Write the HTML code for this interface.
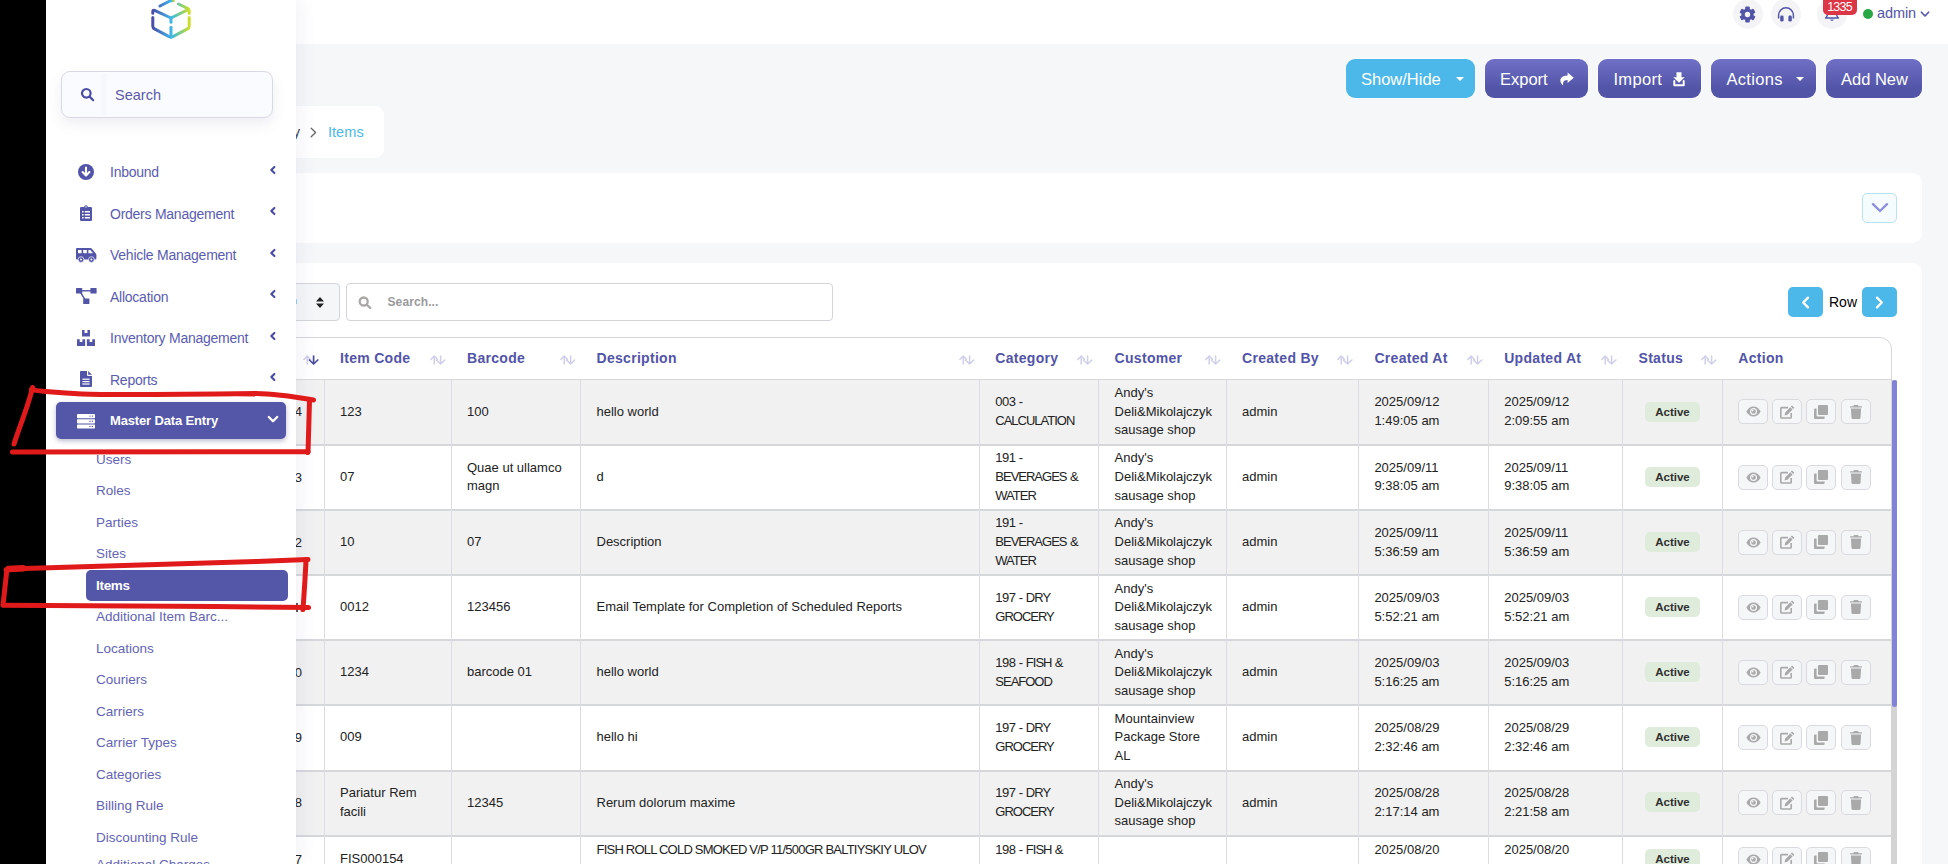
<!DOCTYPE html>
<html lang="en">
<head>
<meta charset="utf-8">
<title>Items</title>
<style>
*{box-sizing:border-box;margin:0;padding:0}
html,body{width:1948px;height:864px;overflow:hidden}
body{font-family:"Liberation Sans",sans-serif;background:#f6f7f9;color:#222;position:relative;font-size:13px}
.abs{position:absolute}
#black{left:0;top:0;width:46px;height:864px;background:#000}
#topbar{left:296px;top:0;width:1652px;height:44px;background:#fff}
#sidebar{left:46px;top:0;width:250px;height:864px;background:#fff;box-shadow:5px 0 16px rgba(90,100,160,.075);z-index:5;overflow:hidden}
/* sidebar */
.sb-search{left:15px;top:71px;width:212px;height:47px;border:1px solid #d9d9e3;border-radius:9px;background:#fafbfe;box-shadow:0 6px 14px rgba(90,90,140,.10)}
.sb-search span{position:absolute;left:53px;top:15px;font-size:14.5px;color:#5a5aa8}
.mi{left:0;width:250px;height:36px;color:#5a5cb0;font-size:14px;letter-spacing:-.25px}
.mi .t{position:absolute;left:64px;top:11.5px;white-space:nowrap}
.mi svg.ic{position:absolute}
.mi svg.ch{position:absolute;left:222px;top:9px}
.mi.act{left:10px;width:230px;background:#5456a8;border-radius:5px;color:#fff;box-shadow:0 2px 5px rgba(60,60,120,.35)}
.mi.act .t{left:54px;font-weight:bold;font-size:13px;letter-spacing:-.15px}
.si{left:50px;color:#6364b4;font-size:13.5px;white-space:nowrap;line-height:16px}
.si.act{line-height:normal;letter-spacing:-.3px;left:40px;width:202px;height:31px;background:#5456a8;border-radius:5px;color:#fff;font-weight:bold;padding:8px 0 0 10px}
/* top buttons */
.btn{top:59px;height:39px;border-radius:9px;box-shadow:0 0 0 1px rgba(255,255,255,.55);color:#fff;font-size:16.5px;background:linear-gradient(#7071c6,#5254a8 75%);white-space:nowrap}
.btn span{position:absolute;top:10.8px}
.btn.blue{background:#4cb8e9}
.card{background:#fff;border-radius:10px}
/* table */
#tbl{border:1px solid #d6d6da;border-radius:0 12px 0 0;background:#fff;overflow:hidden}
.th{top:0;height:42px;color:#5254a8;font-weight:bold;font-size:14px;white-space:nowrap;line-height:40.6px;letter-spacing:.3px}
.row{left:0;width:100%}
.row.odd{background:#f1f1f1}
.cell{color:#222;font-size:13px;line-height:19px;white-space:nowrap}
.cat{letter-spacing:-1px;word-spacing:.8px}.cat .n{letter-spacing:-.45px;word-spacing:0}.u{letter-spacing:-.78px}
.vl{top:42px;width:1px;height:500px;background:#dcdce2}
.badge{width:55px;height:20px;border-radius:5px;background:#dfecdc;color:#2f2f2f;font-weight:bold;font-size:11.5px;text-align:center;line-height:20px}
.ab{width:29.4px;height:24.9px;border:1px solid #d9d9df;border-radius:5px;background:#f5f6f8}
</style>
</head>
<body>
<div id="black" class="abs"></div>
<div id="topbar" class="abs"></div>

<!-- MAIN CONTENT -->
<div id="main">
<div class="abs" style="left:1732.5px;top:-1px;width:30px;height:30px;border-radius:50%;background:#f4f4f6"></div>
<svg class="abs" style="left:1739px;top:5.6px" width="17" height="17" viewBox="0 0 17 17"><g fill="#5254a8"><circle cx="8.5" cy="8.5" r="6.1"/><g><rect x="6.2" y="0.5" width="4.6" height="4" rx="1"/><rect x="6.2" y="12.5" width="4.6" height="4" rx="1"/></g><g transform="rotate(60 8.5 8.5)"><rect x="6.2" y="0.5" width="4.6" height="4" rx="1"/><rect x="6.2" y="12.5" width="4.6" height="4" rx="1"/></g><g transform="rotate(120 8.5 8.5)"><rect x="6.2" y="0.5" width="4.6" height="4" rx="1"/><rect x="6.2" y="12.5" width="4.6" height="4" rx="1"/></g></g><circle cx="8.5" cy="8.5" r="2.7" fill="#f4f4f6"/></svg>
<div class="abs" style="left:1771px;top:-1px;width:30px;height:30px;border-radius:50%;background:#f4f4f6"></div>
<svg class="abs" style="left:1776.6px;top:6.7px" width="18" height="16" viewBox="0 0 18 16"><path d="M1.6 11.5 V8.2 A7.4 7.4 0 0 1 16.4 8.2 V11.5" fill="none" stroke="#5254a8" stroke-width="1.5"/><rect x="3.2" y="8.6" width="3.4" height="6" rx="1.4" fill="#5254a8"/><rect x="11.4" y="8.6" width="3.4" height="6" rx="1.4" fill="#5254a8"/></svg>
<div class="abs" style="left:1817px;top:-1px;width:30px;height:30px;border-radius:50%;background:#f4f4f6"></div>
<svg class="abs" style="left:1824px;top:7px" width="16" height="16" viewBox="0 0 16 16"><path d="M8 1 C4.6 1 3.6 3.8 3.6 6.4 C3.6 9 2.4 10.2 1.6 11 H14.4 C13.6 10.2 12.4 9 12.4 6.4 C12.4 3.8 11.4 1 8 1 Z" fill="none" stroke="#5254a8" stroke-width="1.5" stroke-linejoin="round"/><path d="M6.2 12.6 A1.9 1.9 0 0 0 9.8 12.6 Z" fill="#5254a8"/></svg>
<div class="abs" style="left:1823px;top:-4px;width:34px;height:19px;border-radius:5px;background:#dc3545;color:#fff;font-size:12.5px;text-align:center;line-height:22.4px;letter-spacing:-.8px;padding-right:1px">1335</div>
<div class="abs" style="left:1862.5px;top:9px;width:10px;height:10px;border-radius:50%;background:#28a745"></div>
<div class="abs" style="left:1877px;top:4.5px;font-size:14.5px;color:#5254a8;letter-spacing:-.1px">admin</div>
<svg class="abs" style="left:1920px;top:11px" width="10" height="7" viewBox="0 0 10 7"><path d="M1.4 1.2 L5 5 L8.6 1.2" fill="none" stroke="#5254a8" stroke-width="1.6" stroke-linecap="round" stroke-linejoin="round"/></svg>
<div class="abs btn blue" style="left:1346px;width:129px"><span style="left:15px">Show/Hide</span><svg class="abs" style="left:110px;top:18px" width="8" height="4" viewBox="0 0 8 4"><path d="M0 0 H8 L4 4 Z" fill="#fff"/></svg></div>
<div class="abs btn" style="left:1485px;width:103px"><span style="left:15px">Export</span><svg class="abs" style="left:73.5px;top:12.6px" width="15" height="14" viewBox="0 0 15 14"><path d="M8.6 0.6 L14.8 5.8 L8.6 11 V8 C5.4 8 3.4 9.2 4.2 13.4 C0.4 10.8 -0.8 3.8 8.6 3.4 Z" fill="#fff"/></svg></div>
<div class="abs btn" style="left:1598px;width:103px"><span style="left:15.4px;letter-spacing:.35px">Import</span><svg class="abs" style="left:75.4px;top:12.8px" width="12" height="15" viewBox="0 0 12 15"><path d="M3.5 0.2 H8.5 V5.2 H11.7 L6 10.8 L0.3 5.2 H3.5 Z" fill="#fff"/><path d="M1.3 9 V13.2 H10.7 V9" fill="none" stroke="#fff" stroke-width="2" stroke-linejoin="round" stroke-linecap="round"/></svg></div>
<div class="abs btn" style="left:1711px;width:105px"><span style="left:15.5px;letter-spacing:.3px">Actions</span><svg class="abs" style="left:85px;top:18px" width="8" height="4" viewBox="0 0 8 4"><path d="M0 0 H8 L4 4 Z" fill="#fff"/></svg></div>
<div class="abs btn" style="left:1826px;width:96px"><span style="left:15px">Add New</span></div>
<div class="abs card" style="left:200px;top:106px;width:184px;height:52px;border-radius:9px"></div>
<div class="abs" style="left:180px;top:124px;width:120px;text-align:right;font-size:14px;color:#444;white-space:nowrap">Master Data Entry</div>
<svg class="abs" style="left:310px;top:127px" width="7" height="11" viewBox="0 0 7 11"><path d="M1.2 1.2 L5.6 5.5 L1.2 9.8" fill="none" stroke="#666" stroke-width="1.3" stroke-linecap="round" stroke-linejoin="round"/></svg>
<div class="abs" style="left:328px;top:123.6px;font-size:14.6px;color:#4cb8e9">Items</div>
<div class="abs card" style="left:250px;top:173px;width:1672px;height:70px"></div>
<div class="abs" style="left:1862px;top:193px;width:35px;height:30px;border:1px solid #b9e2f6;border-radius:5px;background:#f6fbfe"></div>
<svg class="abs" style="left:1871px;top:202px" width="18" height="12" viewBox="0 0 18 12"><path d="M2 2.2 L9 9 L16 2.2" fill="none" stroke="#8e8edb" stroke-width="2.4" stroke-linecap="round" stroke-linejoin="round"/></svg>
<div class="abs card" style="left:250px;top:263px;width:1672px;height:640px"></div>
<div class="abs" style="left:250px;top:283px;width:90px;height:38px;border:1px solid #d4d4da;border-radius:4px;background:#f5f6f8"></div>
<svg class="abs" style="left:316px;top:297px" width="8" height="11" viewBox="0 0 8 11"><path d="M0 4.4 L4 0 L8 4.4 Z M0 6.6 L4 11 L8 6.6 Z" fill="#222"/></svg>
<div class="abs" style="left:346px;top:283px;width:487px;height:38px;border:1px solid #d4d4da;border-radius:4px;background:#fff"></div>
<svg class="abs" style="left:358px;top:296px" width="14" height="14" viewBox="0 0 14 14" fill="none" stroke="#a9a6a6" stroke-width="2.3" stroke-linecap="round"><circle cx="5.7" cy="5.5" r="4"/><path d="M8.9 8.7 L12.2 12"/></svg><div class="abs" style="left:296px;top:298.5px;width:1.4px;height:5px;background:#8ccdf0;border-radius:1px"></div>
<div class="abs" style="left:387.5px;top:295px;font-size:12px;font-weight:bold;color:#9a9a9a;letter-spacing:.1px">Search...</div>
<div class="abs" style="left:1788px;top:287px;width:35px;height:30px;border-radius:5px;background:#4cb8e9"></div>
<svg class="abs" style="left:1801px;top:295.5px" width="9" height="13" viewBox="0 0 9 13"><path d="M7 1.6 L2.2 6.5 L7 11.4" fill="none" stroke="#fff" stroke-width="2.3" stroke-linecap="round" stroke-linejoin="round"/></svg>
<div class="abs" style="left:1829px;top:293.8px;font-size:14px;color:#000">Row</div>
<div class="abs" style="left:1862px;top:287px;width:35px;height:30px;border-radius:5px;background:#4cb8e9"></div>
<svg class="abs" style="left:1875px;top:295.5px" width="9" height="13" viewBox="0 0 9 13"><path d="M2 1.6 L6.8 6.5 L2 11.4" fill="none" stroke="#fff" stroke-width="2.3" stroke-linecap="round" stroke-linejoin="round"/></svg>
<!--T0-->
<div id="tbl" class="abs" style="left:250px;top:337px;width:1642px;height:540px">
<svg class="abs" style="left:52px;top:16.5px" width="16" height="10" viewBox="0 0 16 10" fill="none" stroke-width="1.5" stroke-linecap="round" stroke-linejoin="round"><path d="M4.2 9 V1.2 M0.9 4.4 L4.2 1 L7.5 4.4" stroke="#cfcfec"/><path d="M10.6 1 V8.8 M6.4 5 L10.6 9 L14.8 5" stroke="#4a4ca4" stroke-width="1.7"/></svg>
<div class="abs th" style="left:89px">Item Code</div>
<svg class="abs" style="left:179px;top:16.5px" width="16" height="10" viewBox="0 0 16 10" fill="none" stroke-width="1.5" stroke-linecap="round" stroke-linejoin="round"><path d="M4.2 9 V1.2 M0.9 4.4 L4.2 1 L7.5 4.4" stroke="#cfcfec"/><path d="M10.6 1 V8.8 M6.4 5 L10.6 9 L14.8 5" stroke="#cfcfec" stroke-width="1.5"/></svg>
<div class="abs th" style="left:216px">Barcode</div>
<svg class="abs" style="left:308.5px;top:16.5px" width="16" height="10" viewBox="0 0 16 10" fill="none" stroke-width="1.5" stroke-linecap="round" stroke-linejoin="round"><path d="M4.2 9 V1.2 M0.9 4.4 L4.2 1 L7.5 4.4" stroke="#cfcfec"/><path d="M10.6 1 V8.8 M6.4 5 L10.6 9 L14.8 5" stroke="#cfcfec" stroke-width="1.5"/></svg>
<div class="abs th" style="left:345.5px">Description</div>
<svg class="abs" style="left:707.5px;top:16.5px" width="16" height="10" viewBox="0 0 16 10" fill="none" stroke-width="1.5" stroke-linecap="round" stroke-linejoin="round"><path d="M4.2 9 V1.2 M0.9 4.4 L4.2 1 L7.5 4.4" stroke="#cfcfec"/><path d="M10.6 1 V8.8 M6.4 5 L10.6 9 L14.8 5" stroke="#cfcfec" stroke-width="1.5"/></svg>
<div class="abs th" style="left:744.3px">Category</div>
<svg class="abs" style="left:826px;top:16.5px" width="16" height="10" viewBox="0 0 16 10" fill="none" stroke-width="1.5" stroke-linecap="round" stroke-linejoin="round"><path d="M4.2 9 V1.2 M0.9 4.4 L4.2 1 L7.5 4.4" stroke="#cfcfec"/><path d="M10.6 1 V8.8 M6.4 5 L10.6 9 L14.8 5" stroke="#cfcfec" stroke-width="1.5"/></svg>
<div class="abs th" style="left:863.6px">Customer</div>
<svg class="abs" style="left:954.3px;top:16.5px" width="16" height="10" viewBox="0 0 16 10" fill="none" stroke-width="1.5" stroke-linecap="round" stroke-linejoin="round"><path d="M4.2 9 V1.2 M0.9 4.4 L4.2 1 L7.5 4.4" stroke="#cfcfec"/><path d="M10.6 1 V8.8 M6.4 5 L10.6 9 L14.8 5" stroke="#cfcfec" stroke-width="1.5"/></svg>
<div class="abs th" style="left:991px">Created By</div>
<svg class="abs" style="left:1086px;top:16.5px" width="16" height="10" viewBox="0 0 16 10" fill="none" stroke-width="1.5" stroke-linecap="round" stroke-linejoin="round"><path d="M4.2 9 V1.2 M0.9 4.4 L4.2 1 L7.5 4.4" stroke="#cfcfec"/><path d="M10.6 1 V8.8 M6.4 5 L10.6 9 L14.8 5" stroke="#cfcfec" stroke-width="1.5"/></svg>
<div class="abs th" style="left:1123.4px">Created At</div>
<svg class="abs" style="left:1216px;top:16.5px" width="16" height="10" viewBox="0 0 16 10" fill="none" stroke-width="1.5" stroke-linecap="round" stroke-linejoin="round"><path d="M4.2 9 V1.2 M0.9 4.4 L4.2 1 L7.5 4.4" stroke="#cfcfec"/><path d="M10.6 1 V8.8 M6.4 5 L10.6 9 L14.8 5" stroke="#cfcfec" stroke-width="1.5"/></svg>
<div class="abs th" style="left:1253.2px">Updated At</div>
<svg class="abs" style="left:1350px;top:16.5px" width="16" height="10" viewBox="0 0 16 10" fill="none" stroke-width="1.5" stroke-linecap="round" stroke-linejoin="round"><path d="M4.2 9 V1.2 M0.9 4.4 L4.2 1 L7.5 4.4" stroke="#cfcfec"/><path d="M10.6 1 V8.8 M6.4 5 L10.6 9 L14.8 5" stroke="#cfcfec" stroke-width="1.5"/></svg>
<div class="abs th" style="left:1387.5px">Status</div>
<svg class="abs" style="left:1450px;top:16.5px" width="16" height="10" viewBox="0 0 16 10" fill="none" stroke-width="1.5" stroke-linecap="round" stroke-linejoin="round"><path d="M4.2 9 V1.2 M0.9 4.4 L4.2 1 L7.5 4.4" stroke="#cfcfec"/><path d="M10.6 1 V8.8 M6.4 5 L10.6 9 L14.8 5" stroke="#cfcfec" stroke-width="1.5"/></svg>
<div class="abs th" style="left:1487.3px">Action</div>
<div class="abs" style="left:0;top:41px;width:100%;height:1px;background:#d9d9dc"></div>
<div class="abs row odd" style="top:42px;height:64.0px"></div>
<div class="abs" style="left:0;top:106.0px;width:100%;height:2px;background:#d6d7db"></div>
<div class="abs cell" style="left:31px;width:20px;text-align:right;top:64.0px">4</div>
<div class="abs cell" style="left:89px;top:66px;line-height:16px">123</div>
<div class="abs cell" style="left:216px;top:66px;line-height:16px">100</div>
<div class="abs cell" style="left:345.5px;top:66px;line-height:16px">hello world</div>
<div class="abs cell cat" style="left:744.3px;top:56px;line-height:16px"><span class="n">003 -</span></div>
<div class="abs cell cat" style="left:744.3px;top:75px;line-height:16px">CALCULATION</div>
<div class="abs cell" style="left:863.6px;top:47px;line-height:16px">Andy's</div>
<div class="abs cell" style="left:863.6px;top:66px;line-height:16px">Deli&amp;Mikolajczyk</div>
<div class="abs cell" style="left:863.6px;top:84px;line-height:16px">sausage shop</div>
<div class="abs cell" style="left:991px;top:66px;line-height:16px">admin</div>
<div class="abs cell" style="left:1123.4px;top:56px;line-height:16px">2025/09/12</div>
<div class="abs cell" style="left:1123.4px;top:75px;line-height:16px">1:49:05 am</div>
<div class="abs cell" style="left:1253.2px;top:56px;line-height:16px">2025/09/12</div>
<div class="abs cell" style="left:1253.2px;top:75px;line-height:16px">2:09:55 am</div>
<div class="abs badge" style="left:1394px;top:64.2px">Active</div>
<div class="abs ab" style="left:1487.2px;top:61.1px"><svg class="abs" style="left:6.5px;top:6px" width="15" height="11" viewBox="0 0 15 11"><path d="M.4 5.5 C2 2.2 4.6 .4 7.5 .4 C10.4 .4 13 2.2 14.6 5.5 C13 8.8 10.4 10.6 7.5 10.6 C4.6 10.6 2 8.8 .4 5.5 Z" fill="#a9a9a9"/><circle cx="7.5" cy="5.5" r="3.5" fill="#f5f6f8"/><circle cx="7.5" cy="5.5" r="2.3" fill="#a9a9a9"/><circle cx="6.6" cy="4.6" r=".9" fill="#f5f6f8"/></svg></div>
<div class="abs ab" style="left:1521.2px;top:61.1px"><svg class="abs" style="left:7px;top:4.5px" width="15" height="14" viewBox="0 0 15 14"><path d="M8 2.6 H1.6 Q.8 2.6 .8 3.4 V12.2 Q.8 13 1.6 13 H10.4 Q11.2 13 11.2 12.2 V8" fill="none" stroke="#a9a9a9" stroke-width="1.6"/><path d="M12 .4 L14.4 2.8 L13.2 4 L10.8 1.6 Z M10.2 2.2 L12.6 4.6 L7.4 9.8 L4.6 10.4 L5.2 7.4 Z" fill="#a9a9a9"/></svg></div>
<div class="abs ab" style="left:1555.2px;top:61.1px"><svg class="abs" style="left:7px;top:4.5px" width="14" height="14" viewBox="0 0 14 14"><rect x="4" y="0" width="10" height="10" rx="1" fill="#a9a9a9"/><path d="M2.6 3.4 H1 Q0 3.4 0 4.4 V13 Q0 14 1 14 H9.6 Q10.6 14 10.6 13 V11.4 H3.6 Q2.6 11.4 2.6 10.4 Z" fill="#a9a9a9"/></svg></div>
<div class="abs ab" style="left:1590.3px;top:61.1px"><svg class="abs" style="left:8px;top:4.5px" width="12" height="14" viewBox="0 0 12 14"><path d="M4 0 H8 L8.6 1.2 H11.4 Q12 1.2 12 1.8 V2.6 H0 V1.8 Q0 1.2 .6 1.2 H3.4 Z" fill="#a9a9a9"/><path d="M.9 3.6 H11.1 L10.5 12.8 Q10.4 14 9.2 14 H2.8 Q1.6 14 1.5 12.8 Z" fill="#a9a9a9"/></svg></div>
<div class="abs row" style="top:108.0px;height:63.1px"></div>
<div class="abs" style="left:0;top:171.1px;width:100%;height:2px;background:#d6d7db"></div>
<div class="abs cell" style="left:31px;width:20px;text-align:right;top:129.6px">3</div>
<div class="abs cell" style="left:89px;top:131px;line-height:16px">07</div>
<div class="abs cell" style="left:216px;top:122px;line-height:16px">Quae ut ullamco</div>
<div class="abs cell" style="left:216px;top:140px;line-height:16px">magn</div>
<div class="abs cell" style="left:345.5px;top:131px;line-height:16px">d</div>
<div class="abs cell cat" style="left:744.3px;top:112px;line-height:16px"><span class="n">191 -</span></div>
<div class="abs cell cat" style="left:744.3px;top:131px;line-height:16px">BEVERAGES &amp;</div>
<div class="abs cell cat" style="left:744.3px;top:150px;line-height:16px">WATER</div>
<div class="abs cell" style="left:863.6px;top:112px;line-height:16px">Andy's</div>
<div class="abs cell" style="left:863.6px;top:131px;line-height:16px">Deli&amp;Mikolajczyk</div>
<div class="abs cell" style="left:863.6px;top:150px;line-height:16px">sausage shop</div>
<div class="abs cell" style="left:991px;top:131px;line-height:16px">admin</div>
<div class="abs cell" style="left:1123.4px;top:122px;line-height:16px">2025/09/11</div>
<div class="abs cell" style="left:1123.4px;top:140px;line-height:16px">9:38:05 am</div>
<div class="abs cell" style="left:1253.2px;top:122px;line-height:16px">2025/09/11</div>
<div class="abs cell" style="left:1253.2px;top:140px;line-height:16px">9:38:05 am</div>
<div class="abs badge" style="left:1394px;top:128.9px">Active</div>
<div class="abs ab" style="left:1487.2px;top:126.7px"><svg class="abs" style="left:6.5px;top:6px" width="15" height="11" viewBox="0 0 15 11"><path d="M.4 5.5 C2 2.2 4.6 .4 7.5 .4 C10.4 .4 13 2.2 14.6 5.5 C13 8.8 10.4 10.6 7.5 10.6 C4.6 10.6 2 8.8 .4 5.5 Z" fill="#a9a9a9"/><circle cx="7.5" cy="5.5" r="3.5" fill="#f5f6f8"/><circle cx="7.5" cy="5.5" r="2.3" fill="#a9a9a9"/><circle cx="6.6" cy="4.6" r=".9" fill="#f5f6f8"/></svg></div>
<div class="abs ab" style="left:1521.2px;top:126.7px"><svg class="abs" style="left:7px;top:4.5px" width="15" height="14" viewBox="0 0 15 14"><path d="M8 2.6 H1.6 Q.8 2.6 .8 3.4 V12.2 Q.8 13 1.6 13 H10.4 Q11.2 13 11.2 12.2 V8" fill="none" stroke="#a9a9a9" stroke-width="1.6"/><path d="M12 .4 L14.4 2.8 L13.2 4 L10.8 1.6 Z M10.2 2.2 L12.6 4.6 L7.4 9.8 L4.6 10.4 L5.2 7.4 Z" fill="#a9a9a9"/></svg></div>
<div class="abs ab" style="left:1555.2px;top:126.7px"><svg class="abs" style="left:7px;top:4.5px" width="14" height="14" viewBox="0 0 14 14"><rect x="4" y="0" width="10" height="10" rx="1" fill="#a9a9a9"/><path d="M2.6 3.4 H1 Q0 3.4 0 4.4 V13 Q0 14 1 14 H9.6 Q10.6 14 10.6 13 V11.4 H3.6 Q2.6 11.4 2.6 10.4 Z" fill="#a9a9a9"/></svg></div>
<div class="abs ab" style="left:1590.3px;top:126.7px"><svg class="abs" style="left:8px;top:4.5px" width="12" height="14" viewBox="0 0 12 14"><path d="M4 0 H8 L8.6 1.2 H11.4 Q12 1.2 12 1.8 V2.6 H0 V1.8 Q0 1.2 .6 1.2 H3.4 Z" fill="#a9a9a9"/><path d="M.9 3.6 H11.1 L10.5 12.8 Q10.4 14 9.2 14 H2.8 Q1.6 14 1.5 12.8 Z" fill="#a9a9a9"/></svg></div>
<div class="abs row odd" style="top:173.1px;height:63.1px"></div>
<div class="abs" style="left:0;top:236.2px;width:100%;height:2px;background:#d6d7db"></div>
<div class="abs cell" style="left:31px;width:20px;text-align:right;top:194.7px">2</div>
<div class="abs cell" style="left:89px;top:196px;line-height:16px">10</div>
<div class="abs cell" style="left:216px;top:196px;line-height:16px">07</div>
<div class="abs cell" style="left:345.5px;top:196px;line-height:16px">Description</div>
<div class="abs cell cat" style="left:744.3px;top:177px;line-height:16px"><span class="n">191 -</span></div>
<div class="abs cell cat" style="left:744.3px;top:196px;line-height:16px">BEVERAGES &amp;</div>
<div class="abs cell cat" style="left:744.3px;top:215px;line-height:16px">WATER</div>
<div class="abs cell" style="left:863.6px;top:177px;line-height:16px">Andy's</div>
<div class="abs cell" style="left:863.6px;top:196px;line-height:16px">Deli&amp;Mikolajczyk</div>
<div class="abs cell" style="left:863.6px;top:215px;line-height:16px">sausage shop</div>
<div class="abs cell" style="left:991px;top:196px;line-height:16px">admin</div>
<div class="abs cell" style="left:1123.4px;top:187px;line-height:16px">2025/09/11</div>
<div class="abs cell" style="left:1123.4px;top:206px;line-height:16px">5:36:59 am</div>
<div class="abs cell" style="left:1253.2px;top:187px;line-height:16px">2025/09/11</div>
<div class="abs cell" style="left:1253.2px;top:206px;line-height:16px">5:36:59 am</div>
<div class="abs badge" style="left:1394px;top:194.1px">Active</div>
<div class="abs ab" style="left:1487.2px;top:191.8px"><svg class="abs" style="left:6.5px;top:6px" width="15" height="11" viewBox="0 0 15 11"><path d="M.4 5.5 C2 2.2 4.6 .4 7.5 .4 C10.4 .4 13 2.2 14.6 5.5 C13 8.8 10.4 10.6 7.5 10.6 C4.6 10.6 2 8.8 .4 5.5 Z" fill="#a9a9a9"/><circle cx="7.5" cy="5.5" r="3.5" fill="#f5f6f8"/><circle cx="7.5" cy="5.5" r="2.3" fill="#a9a9a9"/><circle cx="6.6" cy="4.6" r=".9" fill="#f5f6f8"/></svg></div>
<div class="abs ab" style="left:1521.2px;top:191.8px"><svg class="abs" style="left:7px;top:4.5px" width="15" height="14" viewBox="0 0 15 14"><path d="M8 2.6 H1.6 Q.8 2.6 .8 3.4 V12.2 Q.8 13 1.6 13 H10.4 Q11.2 13 11.2 12.2 V8" fill="none" stroke="#a9a9a9" stroke-width="1.6"/><path d="M12 .4 L14.4 2.8 L13.2 4 L10.8 1.6 Z M10.2 2.2 L12.6 4.6 L7.4 9.8 L4.6 10.4 L5.2 7.4 Z" fill="#a9a9a9"/></svg></div>
<div class="abs ab" style="left:1555.2px;top:191.8px"><svg class="abs" style="left:7px;top:4.5px" width="14" height="14" viewBox="0 0 14 14"><rect x="4" y="0" width="10" height="10" rx="1" fill="#a9a9a9"/><path d="M2.6 3.4 H1 Q0 3.4 0 4.4 V13 Q0 14 1 14 H9.6 Q10.6 14 10.6 13 V11.4 H3.6 Q2.6 11.4 2.6 10.4 Z" fill="#a9a9a9"/></svg></div>
<div class="abs ab" style="left:1590.3px;top:191.8px"><svg class="abs" style="left:8px;top:4.5px" width="12" height="14" viewBox="0 0 12 14"><path d="M4 0 H8 L8.6 1.2 H11.4 Q12 1.2 12 1.8 V2.6 H0 V1.8 Q0 1.2 .6 1.2 H3.4 Z" fill="#a9a9a9"/><path d="M.9 3.6 H11.1 L10.5 12.8 Q10.4 14 9.2 14 H2.8 Q1.6 14 1.5 12.8 Z" fill="#a9a9a9"/></svg></div>
<div class="abs row" style="top:238.2px;height:63.1px"></div>
<div class="abs" style="left:0;top:301.3px;width:100%;height:2px;background:#d6d7db"></div>
<div class="abs" style="left:45.4px;top:265.0px;width:1.2px;height:9.4px;background:#555"></div>
<div class="abs cell" style="left:89px;top:261px;line-height:16px">0012</div>
<div class="abs cell" style="left:216px;top:261px;line-height:16px">123456</div>
<div class="abs cell" style="left:345.5px;top:261px;line-height:16px">Email Template for Completion of Scheduled Reports</div>
<div class="abs cell cat" style="left:744.3px;top:252px;line-height:16px"><span class="n">197 - </span>DRY</div>
<div class="abs cell cat" style="left:744.3px;top:271px;line-height:16px">GROCERY</div>
<div class="abs cell" style="left:863.6px;top:243px;line-height:16px">Andy's</div>
<div class="abs cell" style="left:863.6px;top:261px;line-height:16px">Deli&amp;Mikolajczyk</div>
<div class="abs cell" style="left:863.6px;top:280px;line-height:16px">sausage shop</div>
<div class="abs cell" style="left:991px;top:261px;line-height:16px">admin</div>
<div class="abs cell" style="left:1123.4px;top:252px;line-height:16px">2025/09/03</div>
<div class="abs cell" style="left:1123.4px;top:271px;line-height:16px">5:52:21 am</div>
<div class="abs cell" style="left:1253.2px;top:252px;line-height:16px">2025/09/03</div>
<div class="abs cell" style="left:1253.2px;top:271px;line-height:16px">5:52:21 am</div>
<div class="abs badge" style="left:1394px;top:259.1px">Active</div>
<div class="abs ab" style="left:1487.2px;top:256.9px"><svg class="abs" style="left:6.5px;top:6px" width="15" height="11" viewBox="0 0 15 11"><path d="M.4 5.5 C2 2.2 4.6 .4 7.5 .4 C10.4 .4 13 2.2 14.6 5.5 C13 8.8 10.4 10.6 7.5 10.6 C4.6 10.6 2 8.8 .4 5.5 Z" fill="#a9a9a9"/><circle cx="7.5" cy="5.5" r="3.5" fill="#f5f6f8"/><circle cx="7.5" cy="5.5" r="2.3" fill="#a9a9a9"/><circle cx="6.6" cy="4.6" r=".9" fill="#f5f6f8"/></svg></div>
<div class="abs ab" style="left:1521.2px;top:256.9px"><svg class="abs" style="left:7px;top:4.5px" width="15" height="14" viewBox="0 0 15 14"><path d="M8 2.6 H1.6 Q.8 2.6 .8 3.4 V12.2 Q.8 13 1.6 13 H10.4 Q11.2 13 11.2 12.2 V8" fill="none" stroke="#a9a9a9" stroke-width="1.6"/><path d="M12 .4 L14.4 2.8 L13.2 4 L10.8 1.6 Z M10.2 2.2 L12.6 4.6 L7.4 9.8 L4.6 10.4 L5.2 7.4 Z" fill="#a9a9a9"/></svg></div>
<div class="abs ab" style="left:1555.2px;top:256.9px"><svg class="abs" style="left:7px;top:4.5px" width="14" height="14" viewBox="0 0 14 14"><rect x="4" y="0" width="10" height="10" rx="1" fill="#a9a9a9"/><path d="M2.6 3.4 H1 Q0 3.4 0 4.4 V13 Q0 14 1 14 H9.6 Q10.6 14 10.6 13 V11.4 H3.6 Q2.6 11.4 2.6 10.4 Z" fill="#a9a9a9"/></svg></div>
<div class="abs ab" style="left:1590.3px;top:256.9px"><svg class="abs" style="left:8px;top:4.5px" width="12" height="14" viewBox="0 0 12 14"><path d="M4 0 H8 L8.6 1.2 H11.4 Q12 1.2 12 1.8 V2.6 H0 V1.8 Q0 1.2 .6 1.2 H3.4 Z" fill="#a9a9a9"/><path d="M.9 3.6 H11.1 L10.5 12.8 Q10.4 14 9.2 14 H2.8 Q1.6 14 1.5 12.8 Z" fill="#a9a9a9"/></svg></div>
<div class="abs row odd" style="top:303.3px;height:63.1px"></div>
<div class="abs" style="left:0;top:366.4px;width:100%;height:2px;background:#d6d7db"></div>
<div class="abs cell" style="left:31px;width:20px;text-align:right;top:324.8px">0</div>
<div class="abs cell" style="left:89px;top:326px;line-height:16px">1234</div>
<div class="abs cell" style="left:216px;top:326px;line-height:16px">barcode 01</div>
<div class="abs cell" style="left:345.5px;top:326px;line-height:16px">hello world</div>
<div class="abs cell cat" style="left:744.3px;top:317px;line-height:16px"><span class="n">198 - </span>FISH &amp;</div>
<div class="abs cell cat" style="left:744.3px;top:336px;line-height:16px">SEAFOOD</div>
<div class="abs cell" style="left:863.6px;top:308px;line-height:16px">Andy's</div>
<div class="abs cell" style="left:863.6px;top:326px;line-height:16px">Deli&amp;Mikolajczyk</div>
<div class="abs cell" style="left:863.6px;top:345px;line-height:16px">sausage shop</div>
<div class="abs cell" style="left:991px;top:326px;line-height:16px">admin</div>
<div class="abs cell" style="left:1123.4px;top:317px;line-height:16px">2025/09/03</div>
<div class="abs cell" style="left:1123.4px;top:336px;line-height:16px">5:16:25 am</div>
<div class="abs cell" style="left:1253.2px;top:317px;line-height:16px">2025/09/03</div>
<div class="abs cell" style="left:1253.2px;top:336px;line-height:16px">5:16:25 am</div>
<div class="abs badge" style="left:1394px;top:324.2px">Active</div>
<div class="abs ab" style="left:1487.2px;top:321.9px"><svg class="abs" style="left:6.5px;top:6px" width="15" height="11" viewBox="0 0 15 11"><path d="M.4 5.5 C2 2.2 4.6 .4 7.5 .4 C10.4 .4 13 2.2 14.6 5.5 C13 8.8 10.4 10.6 7.5 10.6 C4.6 10.6 2 8.8 .4 5.5 Z" fill="#a9a9a9"/><circle cx="7.5" cy="5.5" r="3.5" fill="#f5f6f8"/><circle cx="7.5" cy="5.5" r="2.3" fill="#a9a9a9"/><circle cx="6.6" cy="4.6" r=".9" fill="#f5f6f8"/></svg></div>
<div class="abs ab" style="left:1521.2px;top:321.9px"><svg class="abs" style="left:7px;top:4.5px" width="15" height="14" viewBox="0 0 15 14"><path d="M8 2.6 H1.6 Q.8 2.6 .8 3.4 V12.2 Q.8 13 1.6 13 H10.4 Q11.2 13 11.2 12.2 V8" fill="none" stroke="#a9a9a9" stroke-width="1.6"/><path d="M12 .4 L14.4 2.8 L13.2 4 L10.8 1.6 Z M10.2 2.2 L12.6 4.6 L7.4 9.8 L4.6 10.4 L5.2 7.4 Z" fill="#a9a9a9"/></svg></div>
<div class="abs ab" style="left:1555.2px;top:321.9px"><svg class="abs" style="left:7px;top:4.5px" width="14" height="14" viewBox="0 0 14 14"><rect x="4" y="0" width="10" height="10" rx="1" fill="#a9a9a9"/><path d="M2.6 3.4 H1 Q0 3.4 0 4.4 V13 Q0 14 1 14 H9.6 Q10.6 14 10.6 13 V11.4 H3.6 Q2.6 11.4 2.6 10.4 Z" fill="#a9a9a9"/></svg></div>
<div class="abs ab" style="left:1590.3px;top:321.9px"><svg class="abs" style="left:8px;top:4.5px" width="12" height="14" viewBox="0 0 12 14"><path d="M4 0 H8 L8.6 1.2 H11.4 Q12 1.2 12 1.8 V2.6 H0 V1.8 Q0 1.2 .6 1.2 H3.4 Z" fill="#a9a9a9"/><path d="M.9 3.6 H11.1 L10.5 12.8 Q10.4 14 9.2 14 H2.8 Q1.6 14 1.5 12.8 Z" fill="#a9a9a9"/></svg></div>
<div class="abs row" style="top:368.4px;height:63.1px"></div>
<div class="abs" style="left:0;top:431.5px;width:100%;height:2px;background:#d6d7db"></div>
<div class="abs cell" style="left:31px;width:20px;text-align:right;top:390.0px">9</div>
<div class="abs cell" style="left:89px;top:391px;line-height:16px">009</div>
<div class="abs cell" style="left:345.5px;top:391px;line-height:16px">hello hi</div>
<div class="abs cell cat" style="left:744.3px;top:382px;line-height:16px"><span class="n">197 - </span>DRY</div>
<div class="abs cell cat" style="left:744.3px;top:401px;line-height:16px">GROCERY</div>
<div class="abs cell" style="left:863.6px;top:373px;line-height:16px">Mountainview</div>
<div class="abs cell" style="left:863.6px;top:391px;line-height:16px">Package Store</div>
<div class="abs cell" style="left:863.6px;top:410px;line-height:16px">AL</div>
<div class="abs cell" style="left:991px;top:391px;line-height:16px">admin</div>
<div class="abs cell" style="left:1123.4px;top:382px;line-height:16px">2025/08/29</div>
<div class="abs cell" style="left:1123.4px;top:401px;line-height:16px">2:32:46 am</div>
<div class="abs cell" style="left:1253.2px;top:382px;line-height:16px">2025/08/29</div>
<div class="abs cell" style="left:1253.2px;top:401px;line-height:16px">2:32:46 am</div>
<div class="abs badge" style="left:1394px;top:389.4px">Active</div>
<div class="abs ab" style="left:1487.2px;top:387.1px"><svg class="abs" style="left:6.5px;top:6px" width="15" height="11" viewBox="0 0 15 11"><path d="M.4 5.5 C2 2.2 4.6 .4 7.5 .4 C10.4 .4 13 2.2 14.6 5.5 C13 8.8 10.4 10.6 7.5 10.6 C4.6 10.6 2 8.8 .4 5.5 Z" fill="#a9a9a9"/><circle cx="7.5" cy="5.5" r="3.5" fill="#f5f6f8"/><circle cx="7.5" cy="5.5" r="2.3" fill="#a9a9a9"/><circle cx="6.6" cy="4.6" r=".9" fill="#f5f6f8"/></svg></div>
<div class="abs ab" style="left:1521.2px;top:387.1px"><svg class="abs" style="left:7px;top:4.5px" width="15" height="14" viewBox="0 0 15 14"><path d="M8 2.6 H1.6 Q.8 2.6 .8 3.4 V12.2 Q.8 13 1.6 13 H10.4 Q11.2 13 11.2 12.2 V8" fill="none" stroke="#a9a9a9" stroke-width="1.6"/><path d="M12 .4 L14.4 2.8 L13.2 4 L10.8 1.6 Z M10.2 2.2 L12.6 4.6 L7.4 9.8 L4.6 10.4 L5.2 7.4 Z" fill="#a9a9a9"/></svg></div>
<div class="abs ab" style="left:1555.2px;top:387.1px"><svg class="abs" style="left:7px;top:4.5px" width="14" height="14" viewBox="0 0 14 14"><rect x="4" y="0" width="10" height="10" rx="1" fill="#a9a9a9"/><path d="M2.6 3.4 H1 Q0 3.4 0 4.4 V13 Q0 14 1 14 H9.6 Q10.6 14 10.6 13 V11.4 H3.6 Q2.6 11.4 2.6 10.4 Z" fill="#a9a9a9"/></svg></div>
<div class="abs ab" style="left:1590.3px;top:387.1px"><svg class="abs" style="left:8px;top:4.5px" width="12" height="14" viewBox="0 0 12 14"><path d="M4 0 H8 L8.6 1.2 H11.4 Q12 1.2 12 1.8 V2.6 H0 V1.8 Q0 1.2 .6 1.2 H3.4 Z" fill="#a9a9a9"/><path d="M.9 3.6 H11.1 L10.5 12.8 Q10.4 14 9.2 14 H2.8 Q1.6 14 1.5 12.8 Z" fill="#a9a9a9"/></svg></div>
<div class="abs row odd" style="top:433.5px;height:63.1px"></div>
<div class="abs" style="left:0;top:496.6px;width:100%;height:2px;background:#d6d7db"></div>
<div class="abs cell" style="left:31px;width:20px;text-align:right;top:455.0px">8</div>
<div class="abs cell" style="left:89px;top:447px;line-height:16px">Pariatur Rem</div>
<div class="abs cell" style="left:89px;top:466px;line-height:16px">facili</div>
<div class="abs cell" style="left:216px;top:457px;line-height:16px">12345</div>
<div class="abs cell" style="left:345.5px;top:457px;line-height:16px">Rerum dolorum maxime</div>
<div class="abs cell cat" style="left:744.3px;top:447px;line-height:16px"><span class="n">197 - </span>DRY</div>
<div class="abs cell cat" style="left:744.3px;top:466px;line-height:16px">GROCERY</div>
<div class="abs cell" style="left:863.6px;top:438px;line-height:16px">Andy's</div>
<div class="abs cell" style="left:863.6px;top:457px;line-height:16px">Deli&amp;Mikolajczyk</div>
<div class="abs cell" style="left:863.6px;top:475px;line-height:16px">sausage shop</div>
<div class="abs cell" style="left:991px;top:457px;line-height:16px">admin</div>
<div class="abs cell" style="left:1123.4px;top:447px;line-height:16px">2025/08/28</div>
<div class="abs cell" style="left:1123.4px;top:466px;line-height:16px">2:17:14 am</div>
<div class="abs cell" style="left:1253.2px;top:447px;line-height:16px">2025/08/28</div>
<div class="abs cell" style="left:1253.2px;top:466px;line-height:16px">2:21:58 am</div>
<div class="abs badge" style="left:1394px;top:454.4px">Active</div>
<div class="abs ab" style="left:1487.2px;top:452.1px"><svg class="abs" style="left:6.5px;top:6px" width="15" height="11" viewBox="0 0 15 11"><path d="M.4 5.5 C2 2.2 4.6 .4 7.5 .4 C10.4 .4 13 2.2 14.6 5.5 C13 8.8 10.4 10.6 7.5 10.6 C4.6 10.6 2 8.8 .4 5.5 Z" fill="#a9a9a9"/><circle cx="7.5" cy="5.5" r="3.5" fill="#f5f6f8"/><circle cx="7.5" cy="5.5" r="2.3" fill="#a9a9a9"/><circle cx="6.6" cy="4.6" r=".9" fill="#f5f6f8"/></svg></div>
<div class="abs ab" style="left:1521.2px;top:452.1px"><svg class="abs" style="left:7px;top:4.5px" width="15" height="14" viewBox="0 0 15 14"><path d="M8 2.6 H1.6 Q.8 2.6 .8 3.4 V12.2 Q.8 13 1.6 13 H10.4 Q11.2 13 11.2 12.2 V8" fill="none" stroke="#a9a9a9" stroke-width="1.6"/><path d="M12 .4 L14.4 2.8 L13.2 4 L10.8 1.6 Z M10.2 2.2 L12.6 4.6 L7.4 9.8 L4.6 10.4 L5.2 7.4 Z" fill="#a9a9a9"/></svg></div>
<div class="abs ab" style="left:1555.2px;top:452.1px"><svg class="abs" style="left:7px;top:4.5px" width="14" height="14" viewBox="0 0 14 14"><rect x="4" y="0" width="10" height="10" rx="1" fill="#a9a9a9"/><path d="M2.6 3.4 H1 Q0 3.4 0 4.4 V13 Q0 14 1 14 H9.6 Q10.6 14 10.6 13 V11.4 H3.6 Q2.6 11.4 2.6 10.4 Z" fill="#a9a9a9"/></svg></div>
<div class="abs ab" style="left:1590.3px;top:452.1px"><svg class="abs" style="left:8px;top:4.5px" width="12" height="14" viewBox="0 0 12 14"><path d="M4 0 H8 L8.6 1.2 H11.4 Q12 1.2 12 1.8 V2.6 H0 V1.8 Q0 1.2 .6 1.2 H3.4 Z" fill="#a9a9a9"/><path d="M.9 3.6 H11.1 L10.5 12.8 Q10.4 14 9.2 14 H2.8 Q1.6 14 1.5 12.8 Z" fill="#a9a9a9"/></svg></div>
<div class="abs row" style="top:498.6px;height:63.4px"></div>
<div class="abs" style="left:0;top:562px;width:100%;height:2px;background:#d6d7db"></div>
<div class="abs cell" style="left:31px;width:20px;text-align:right;top:511.7px">7</div>
<div class="abs cell" style="left:89px;top:513px;line-height:16px">FIS000154</div>
<div class="abs cell u" style="left:345.5px;top:504px;line-height:16px">FISH ROLL COLD SMOKED V/P 11/500GR BALTIYSKIY ULOV</div>
<div class="abs cell u" style="left:345.5px;top:523px;line-height:16px">VZ7000010</div>
<div class="abs cell cat" style="left:744.3px;top:504px;line-height:16px"><span class="n">198 - </span>FISH &amp;</div>
<div class="abs cell cat" style="left:744.3px;top:523px;line-height:16px">SEAFOOD</div>
<div class="abs cell" style="left:1123.4px;top:504px;line-height:16px">2025/08/20</div>
<div class="abs cell" style="left:1123.4px;top:523px;line-height:16px">5:50:36 am</div>
<div class="abs cell" style="left:1253.2px;top:504px;line-height:16px">2025/08/20</div>
<div class="abs cell" style="left:1253.2px;top:523px;line-height:16px">5:50:36 am</div>
<div class="abs badge" style="left:1394px;top:511.1px">Active</div>
<div class="abs ab" style="left:1487.2px;top:508.8px"><svg class="abs" style="left:6.5px;top:6px" width="15" height="11" viewBox="0 0 15 11"><path d="M.4 5.5 C2 2.2 4.6 .4 7.5 .4 C10.4 .4 13 2.2 14.6 5.5 C13 8.8 10.4 10.6 7.5 10.6 C4.6 10.6 2 8.8 .4 5.5 Z" fill="#a9a9a9"/><circle cx="7.5" cy="5.5" r="3.5" fill="#f5f6f8"/><circle cx="7.5" cy="5.5" r="2.3" fill="#a9a9a9"/><circle cx="6.6" cy="4.6" r=".9" fill="#f5f6f8"/></svg></div>
<div class="abs ab" style="left:1521.2px;top:508.8px"><svg class="abs" style="left:7px;top:4.5px" width="15" height="14" viewBox="0 0 15 14"><path d="M8 2.6 H1.6 Q.8 2.6 .8 3.4 V12.2 Q.8 13 1.6 13 H10.4 Q11.2 13 11.2 12.2 V8" fill="none" stroke="#a9a9a9" stroke-width="1.6"/><path d="M12 .4 L14.4 2.8 L13.2 4 L10.8 1.6 Z M10.2 2.2 L12.6 4.6 L7.4 9.8 L4.6 10.4 L5.2 7.4 Z" fill="#a9a9a9"/></svg></div>
<div class="abs ab" style="left:1555.2px;top:508.8px"><svg class="abs" style="left:7px;top:4.5px" width="14" height="14" viewBox="0 0 14 14"><rect x="4" y="0" width="10" height="10" rx="1" fill="#a9a9a9"/><path d="M2.6 3.4 H1 Q0 3.4 0 4.4 V13 Q0 14 1 14 H9.6 Q10.6 14 10.6 13 V11.4 H3.6 Q2.6 11.4 2.6 10.4 Z" fill="#a9a9a9"/></svg></div>
<div class="abs ab" style="left:1590.3px;top:508.8px"><svg class="abs" style="left:8px;top:4.5px" width="12" height="14" viewBox="0 0 12 14"><path d="M4 0 H8 L8.6 1.2 H11.4 Q12 1.2 12 1.8 V2.6 H0 V1.8 Q0 1.2 .6 1.2 H3.4 Z" fill="#a9a9a9"/><path d="M.9 3.6 H11.1 L10.5 12.8 Q10.4 14 9.2 14 H2.8 Q1.6 14 1.5 12.8 Z" fill="#a9a9a9"/></svg></div>
<div class="abs vl" style="left:73px"></div>
<div class="abs vl" style="left:200px"></div>
<div class="abs vl" style="left:329px"></div>
<div class="abs vl" style="left:728px"></div>
<div class="abs vl" style="left:847px"></div>
<div class="abs vl" style="left:975px"></div>
<div class="abs vl" style="left:1107px"></div>
<div class="abs vl" style="left:1237px"></div>
<div class="abs vl" style="left:1371px"></div>
<div class="abs vl" style="left:1471px"></div>
</div>
<div class="abs" style="left:1891px;top:380px;width:6px;height:500px;background:#d4d4d4"></div>
<div class="abs" style="left:1892px;top:380px;width:5px;height:327px;background:#8182d8;border-radius:2.5px"></div>
<!--T1-->
</div>

<!-- SIDEBAR -->
<div id="sidebar" class="abs">
<svg class="abs" style="left:100px;top:0" width="50" height="42" viewBox="146 0 50 42" fill="none" stroke="url(#lg)" stroke-width="3" stroke-linecap="round" stroke-linejoin="round">
<defs><linearGradient id="lg" gradientUnits="userSpaceOnUse" x1="152" y1="0" x2="190" y2="0"><stop offset="0" stop-color="#4b4aa6"/><stop offset=".5" stop-color="#3fb6ea"/><stop offset=".62" stop-color="#55c3b8"/><stop offset="1" stop-color="#d2df22"/></linearGradient></defs>
<path d="M160 6 L170.5 0.7 L172.5 0.7"/><circle cx="173.6" cy="0.9" r="1.3" fill="#b5d63c" stroke="none"/>
<path d="M178.5 4 L187.5 8.4 Q189.2 9.3 189.2 11 L189.2 13.2"/>
<path d="M152.8 13.2 L152.8 11.4 Q152.8 9.6 154.6 10.4 L171 18 L188.6 9.4"/>
<path d="M171 18 L171 22.2"/>
<path d="M152.8 17.4 L152.8 26 Q152.8 28 154.5 28.9 L169.6 36.8 Q171 37.6 172.4 36.8 L187.5 28.9 Q189.2 28 189.2 26 L189.2 17.4"/>
<path d="M171 27.2 L171 37"/>
</svg>
<div class="abs sb-search"><svg class="abs" style="left:18px;top:15px" width="16" height="16" viewBox="0 0 16 16" fill="none" stroke="#4a4ca4" stroke-width="2.2" stroke-linecap="round"><circle cx="6.3" cy="6.3" r="4.3"/><path d="M9.6 9.6 L13.2 13.2"/></svg><div class="abs" style="left:38px;top:1px;width:8px;height:43px;background:linear-gradient(90deg,rgba(240,241,248,.0),rgba(240,242,249,.55),rgba(250,251,254,0))"></div><span>Search</span></div>
<div class="abs mi" style="top:152.3px"><svg class="ic" style="left:32px;top:11.7px" width="16" height="16" viewBox="0 0 16 16"><circle cx="8" cy="8" r="8" fill="#5254a8"/><path d="M8 3.6 V11.2 M4.6 8 L8 11.6 L11.4 8" fill="none" stroke="#fff" stroke-width="2.1" stroke-linecap="round" stroke-linejoin="round"/></svg><span class="t">Inbound</span><svg class="ch" width="8" height="10" viewBox="0 0 8 10" style="left:223px;top:12.3px"><path d="M5.4 1.9 L2.3 5 L5.4 8.1" fill="none" stroke="#4a4ca4" stroke-width="2.1" stroke-linecap="round" stroke-linejoin="round"/></svg></div>
<div class="abs mi" style="top:194px"><svg class="ic" style="left:34px;top:11px" width="12" height="16" viewBox="0 0 12 16"><path d="M1.2 2 H4.2 A1.8 1.8 0 0 1 7.8 2 H10.8 Q12 2 12 3.2 V14.8 Q12 16 10.8 16 H1.2 Q0 16 0 14.8 V3.2 Q0 2 1.2 2 Z" fill="#5254a8"/><circle cx="6" cy="2" r=".7" fill="#fff"/><g fill="#fff"><rect x="2" y="6" width="1.6" height="1.5"/><rect x="4.8" y="6" width="5.2" height="1.5"/><rect x="2" y="9" width="1.6" height="1.5"/><rect x="4.8" y="9" width="5.2" height="1.5"/><rect x="2" y="12" width="1.6" height="1.5"/><rect x="4.8" y="12" width="5.2" height="1.5"/></g></svg><span class="t">Orders Management</span><svg class="ch" width="8" height="10" viewBox="0 0 8 10" style="left:223px;top:12.3px"><path d="M5.4 1.9 L2.3 5 L5.4 8.1" fill="none" stroke="#4a4ca4" stroke-width="2.1" stroke-linecap="round" stroke-linejoin="round"/></svg></div>
<div class="abs mi" style="top:235.5px"><svg class="ic" style="left:30px;top:12.5px" width="21" height="15" viewBox="0 0 21 15"><path d="M1 0 H14.2 Q15.2 0 15.9 .8 L19.8 5.4 Q20.4 6.1 20.4 7 V10.6 Q20.4 11.4 19.6 11.4 H1 Q0 11.4 0 10.4 V1 Q0 0 1 0 Z" fill="#5254a8"/><g fill="#fff"><rect x="2" y="2" width="3.6" height="3.2"/><rect x="7.2" y="2" width="3.6" height="3.2"/><path d="M12.4 2 H14.3 L17 5.2 H12.4 Z"/></g><circle cx="5" cy="11.6" r="2.9" fill="#5254a8" stroke="#fff" stroke-width=".7"/><circle cx="15.4" cy="11.6" r="2.9" fill="#5254a8" stroke="#fff" stroke-width=".7"/><circle cx="5" cy="11.6" r="1" fill="#fff"/><circle cx="15.4" cy="11.6" r="1" fill="#fff"/></svg><span class="t">Vehicle Management</span><svg class="ch" width="8" height="10" viewBox="0 0 8 10" style="left:223px;top:12.3px"><path d="M5.4 1.9 L2.3 5 L5.4 8.1" fill="none" stroke="#4a4ca4" stroke-width="2.1" stroke-linecap="round" stroke-linejoin="round"/></svg></div>
<div class="abs mi" style="top:277px"><svg class="ic" style="left:30px;top:11px" width="21" height="17" viewBox="0 0 21 17"><g fill="#5254a8"><rect x="0" y="0" width="6.2" height="5.6" rx=".6"/><rect x="14.4" y="0" width="6.2" height="5.6" rx=".6"/><rect x="7.2" y="10.4" width="6.2" height="5.6" rx=".6"/><rect x="5" y="2.1" width="10" height="1.4"/><path d="M3.9 4.8 L5.2 4 L9.3 10.8 L8 11.6 Z"/></g></svg><span class="t">Allocation</span><svg class="ch" width="8" height="10" viewBox="0 0 8 10" style="left:223px;top:12.3px"><path d="M5.4 1.9 L2.3 5 L5.4 8.1" fill="none" stroke="#4a4ca4" stroke-width="2.1" stroke-linecap="round" stroke-linejoin="round"/></svg></div>
<div class="abs mi" style="top:318.5px"><svg class="ic" style="left:31px;top:11.5px" width="18" height="16" viewBox="0 0 18.6 16" preserveAspectRatio="none"><g fill="#5254a8"><path d="M5.2 0 H7.8 V3 H10.8 V0 H13.4 V6.6 H5.2 Z"/><path d="M0 9.2 H2.8 V12 H5.6 V9.2 H8.4 V16 H0 Z"/><path d="M10.2 9.2 H13 V12 H15.8 V9.2 H18.6 V16 H10.2 Z"/></g></svg><span class="t">Inventory Management</span><svg class="ch" width="8" height="10" viewBox="0 0 8 10" style="left:223px;top:12.3px"><path d="M5.4 1.9 L2.3 5 L5.4 8.1" fill="none" stroke="#4a4ca4" stroke-width="2.1" stroke-linecap="round" stroke-linejoin="round"/></svg></div>
<div class="abs mi" style="top:360px"><svg class="ic" style="left:34px;top:11px" width="12" height="16" viewBox="0 0 12 16"><path d="M1 0 H7 V4 Q7 5 8 5 H12 V15 Q12 16 11 16 H1 Q0 16 0 15 V1 Q0 0 1 0 Z M8.2 0 L12 3.8 H8.2 Z" fill="#5254a8"/><g fill="#fff"><rect x="2.4" y="7.6" width="7.2" height="1.2"/><rect x="2.4" y="10" width="7.2" height="1.2"/><rect x="2.4" y="12.4" width="7.2" height="1.2"/></g></svg><span class="t">Reports</span><svg class="ch" width="8" height="10" viewBox="0 0 8 10" style="left:223px;top:12.3px"><path d="M5.4 1.9 L2.3 5 L5.4 8.1" fill="none" stroke="#4a4ca4" stroke-width="2.1" stroke-linecap="round" stroke-linejoin="round"/></svg></div>
<div class="abs mi act" style="top:402px;height:37px"><svg class="ic" style="left:21px;top:12px" width="18" height="15" viewBox="0 0 18 15"><g fill="#fff"><rect x="0" y="0" width="18" height="4.2" rx=".8"/><rect x="0" y="5.2" width="18" height="4.2" rx=".8"/><rect x="0" y="10.4" width="18" height="4.2" rx=".8"/></g><g fill="#5456a8"><circle cx="13" cy="2.1" r=".7"/><circle cx="15.4" cy="2.1" r=".7"/><circle cx="13" cy="7.3" r=".7"/><circle cx="15.4" cy="7.3" r=".7"/><circle cx="13" cy="12.5" r=".7"/><circle cx="15.4" cy="12.5" r=".7"/></g></svg><span class="t" style="top:10.5px">Master Data Entry</span><svg class="abs" style="left:211px;top:13px" width="12" height="9" viewBox="0 0 12 9"><path d="M1.8 2 L6 6.2 L10.2 2" fill="none" stroke="#fff" stroke-width="2.3" stroke-linecap="round" stroke-linejoin="round"/></svg></div>
<div class="abs si" style="top:452px">Users</div>
<div class="abs si" style="top:483px">Roles</div>
<div class="abs si" style="top:515px">Parties</div>
<div class="abs si" style="top:546px">Sites</div>
<div class="abs si act" style="top:570px">Items</div>
<div class="abs si" style="top:609px">Additional Item Barc...</div>
<div class="abs si" style="top:641px">Locations</div>
<div class="abs si" style="top:672px">Couriers</div>
<div class="abs si" style="top:704px">Carriers</div>
<div class="abs si" style="top:735px">Carrier Types</div>
<div class="abs si" style="top:767px">Categories</div>
<div class="abs si" style="top:798px">Billing Rule</div>
<div class="abs si" style="top:830px">Discounting Rule</div>
<div class="abs si" style="top:857px">Additional Charges</div>
</div>

<!-- ANNOTATIONS -->
<svg id="anno" class="abs" style="left:0;top:0;z-index:20" width="1948" height="864" viewBox="0 0 1948 864" fill="none" stroke="#e01a1a" stroke-width="5" stroke-linecap="round" stroke-linejoin="round">
<path d="M32.5 387.5 C29 404 19 428 14 444"/>
<path d="M31.5 389.5 C33 390.5 60 393 82 394 C110 395 200 394.2 256 393.5 C272 393.6 296 397 313.5 400"/>
<path d="M309.5 400.5 C309 415 308.5 440 308 452.5"/>
<path d="M12.5 452 C60 451.6 200 451.8 308 451.8"/>
<path d="M6 569.8 L24.5 568.6 C80 567 200 563.5 308 559.6" />
<path d="M8.5 569 L23 568.2" stroke-width="6.5"/>
<path d="M6.6 572 C5.4 584 4 596 3 605"/>
<path d="M3.2 605.2 C60 605.6 200 606 308.6 607.6"/>
<path d="M306 560 C305.4 575 304 595 303 609.6"/>
</svg>
</body>
</html>
